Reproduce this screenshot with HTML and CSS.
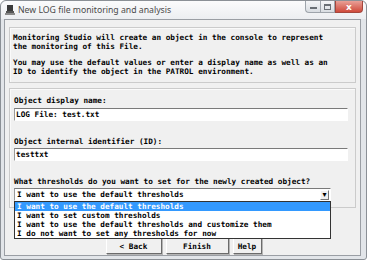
FILE: index.html
```html
<!DOCTYPE html>
<html lang="en">
<head>
    <meta charset="UTF-8">
    <title>New LOG file monitoring and analysis</title>
    <link rel="stylesheet" href="styles.css">
</head>
<body>
<div class="window">
    <div class="titlebar">
        <svg class="app-icon" width="10" height="10" viewBox="0 0 10 10">
            <rect x="2" y="0" width="6" height="6" fill="#3a3a3a"/>
            <rect x="1" y="6" width="8" height="2" fill="#555"/>
            <rect x="0" y="8" width="10" height="2" fill="#8a8a8a"/>
        </svg>
        <span class="title">New LOG file monitoring and analysis</span>
        <div class="caption-buttons">
            <span class="cap cap-min"><i></i></span>
            <span class="cap cap-max"><i></i></span>
            <span class="cap cap-close">x</span>
        </div>
    </div>
    <div class="client">
        <div class="group intro">
            <p>Monitoring Studio will create an object in the console to represent<br>the monitoring of this File.</p>
            <p>You may use the default values or enter a display name as well as an<br>ID to identify the object in the PATROL environment.</p>
        </div>
        <div class="group fields">
            <label class="field-label first">Object display name:</label>
            <input class="field" type="text" value="LOG File: test.txt">
            <label class="field-label">Object internal identifier (ID):</label>
            <input class="field" type="text" value="testtxt">
            <label class="field-label">What thresholds do you want to set for the newly created object?</label>
            <div class="combo">
                <span class="combo-value">I want to use the default thresholds</span>
                <span class="combo-arrow">&#9662;</span>
                <ul class="combo-list">
                    <li class="selected">I want to use the default thresholds</li>
                    <li>I want to set custom thresholds</li>
                    <li>I want to use the default thresholds and customize them</li>
                    <li>I do not want to set any thresholds for now</li>
                </ul>
            </div>
        </div>
        <div class="buttons">
            <button class="btn btn-back">&lt; Back</button>
            <button class="btn btn-finish">Finish</button>
            <button class="btn btn-help">Help</button>
        </div>
    </div>
</div>
</body>
</html>
```

FILE: styles.css
```css
* {
  box-sizing: border-box;
}
body {
  margin: 0;
  background: #fff;
  font-family: "DejaVu Sans Mono", "Liberation Mono", monospace;
  font-size: 7.7px;
  font-weight: bold;
  color: #000;
}
.window {
  width: 367px;
  height: 260px;
  background: #e2e5e9;
  border: 1px solid #8b9096;
  border-radius: 6px 6px 3px 3px;
  display: flex;
  flex-direction: column;
}
.titlebar {
  height: 18px;
  display: flex;
  align-items: center;
  padding: 0 3px 0 4px;
  background: linear-gradient(#fbfbfc, #eceef1);
  border-radius: 6px 6px 0 0;
}
.app-icon {
  flex: none;
}
.title {
  margin-left: 3px;
  font-family: "Noto Sans", sans-serif;
  font-weight: normal;
  font-size: 8.7px;
  color: #4a4a4a;
}
.caption-buttons {
  margin-left: auto;
  align-self: flex-start;
  display: flex;
}
.cap {
  height: 12px;
  display: flex;
  align-items: center;
  justify-content: center;
  border: 1px solid #9ea4ab;
  border-top: none;
  background: linear-gradient(#f4f5f7, #d9dde2);
}
.cap-min,
.cap-max {
  width: 15px;
}
.cap-min {
  border-radius: 0 0 0 4px;
  border-right: none;
}
.cap-min i {
  width: 7px;
  height: 2px;
  margin-top: 3px;
  background: #6a6f75;
}
.cap-max i {
  width: 7px;
  height: 6px;
  border: 1px solid #6a6f75;
  border-top-width: 2px;
}
.cap-close {
  width: 28px;
  border-color: #a4473d;
  border-radius: 0 0 4px 0;
  background: linear-gradient(#e9a097, #cf4a3b);
  color: #fff;
  font-family: "DejaVu Sans", sans-serif;
  font-size: 9px;
}
.client {
  flex: 1;
  margin: 0 5px 3px 3px;
  border: 1px solid #9a9ea4;
  background: #f0f0f0;
  padding: 7px 4px 0 4px;
}
.group {
  border: 1px solid #cbcbcb;
  box-shadow: inset 1px 1px 0 #fafafa;
}
.intro {
  height: 56px;
  padding: 5px 3px 0 3px;
}
.intro p {
  margin: 0 0 7px 0;
  line-height: 9px;
}
.fields {
  margin-top: 5px;
  height: 120px;
  padding: 7px 5px 0 4px;
}
.field-label {
  display: block;
  line-height: 9px;
  margin-top: 16px;
}
.field-label.first {
  margin-top: 0;
}
.field {
  display: block;
  width: 334px;
  height: 13px;
  margin-top: 2px;
  padding: 0 1px;
  font: inherit;
  color: #000;
  background: #fff;
  border: 1px solid;
  border-color: #7a7a7a #fff #fff #9a9a9a;
  outline: none;
}
.field-label.first + .field {
  margin-top: 3px;
}
.combo {
  position: relative;
  width: 317px;
  height: 13px;
  margin-top: 2px;
  display: flex;
  align-items: center;
  padding-left: 2px;
  background: #fff;
  border: 1px solid;
  border-color: #7a7a7a #fff #fff #9a9a9a;
}
.combo-arrow {
  margin-left: auto;
  width: 9px;
  height: 10px;
  margin-right: 1px;
  display: flex;
  align-items: center;
  justify-content: center;
  font-family: "DejaVu Sans", sans-serif;
  font-size: 8px;
  background: #f0f0f0;
  border: 1px solid;
  border-color: #fff #777 #777 #fff;
}
.combo-list {
  position: absolute;
  top: 12px;
  left: -1px;
  width: 317px;
  margin: 0;
  padding: 0;
  list-style: none;
  background: #fff;
  border: 1px solid #333;
}
.combo-list li {
  line-height: 9px;
  padding-left: 2px;
}
.combo-list li.selected {
  background: #3399ff;
  color: #fff;
}
.buttons {
  margin-top: 30px;
  display: flex;
  justify-content: center;
  gap: 4px;
  padding-left: 2px;
}
.btn {
  height: 16px;
  padding: 0;
  font: inherit;
  color: #000;
  background: #f0f0f0;
  border: 1px solid;
  border-color: #fff #6b6b6b #6b6b6b #fff;
  box-shadow: 1px 1px 0 #b5b5b5;
}
.btn-back {
  width: 56px;
}
.btn-finish {
  width: 63px;
}
.btn-help {
  width: 29px;
}
```
